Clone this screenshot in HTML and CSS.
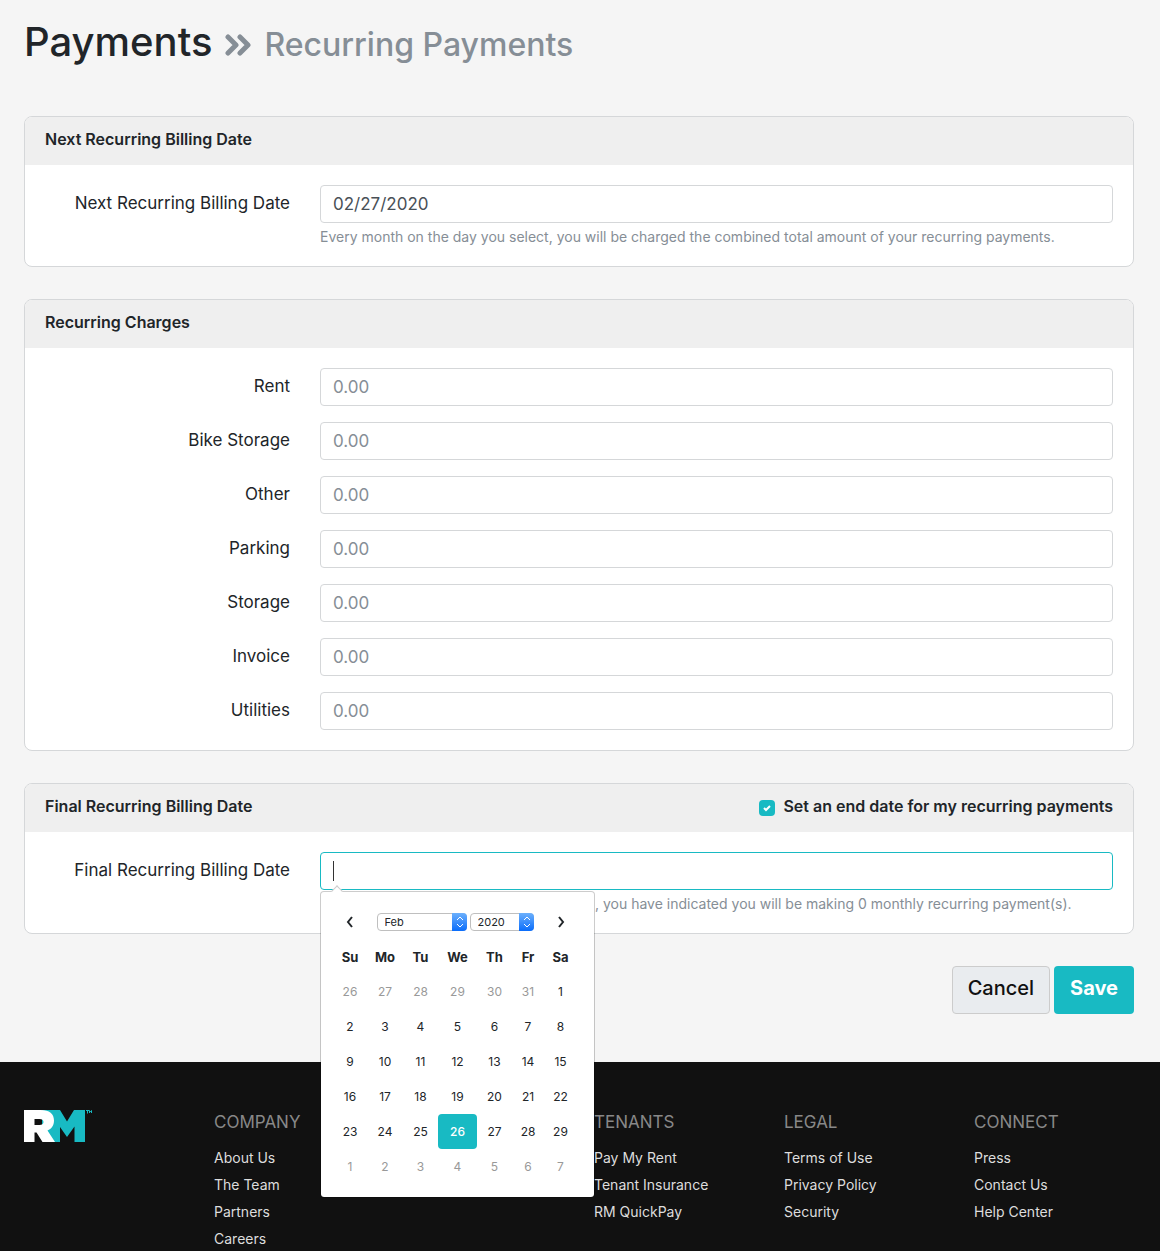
FILE: index.html
```html
<!DOCTYPE html>
<html lang="en">
<head>
<meta charset="utf-8">
<meta name="viewport" content="width=device-width, initial-scale=1">
<title>Recurring Payments</title>
<link rel="stylesheet" href="styles.css">
</head>
<body>
<main class="page">
  <h1 class="title">Payments
    <svg class="title-icon" width="26" height="22" viewBox="0 0 26 22" aria-hidden="true"><path d="M3 3l8 8-8 8M15 3l8 8-8 8"/></svg>
    <small class="subtitle">Recurring Payments</small>
  </h1>

  <form class="form">
    <section class="card">
      <header class="card-header"><h2 class="card-title">Next Recurring Billing Date</h2></header>
      <div class="card-body">
        <div class="row">
          <label class="label" for="next-date">Next Recurring Billing Date</label>
          <div class="field">
            <input class="input" id="next-date" type="text" value="02/27/2020">
            <p class="help">Every month on the day you select, you will be charged the combined total amount of your recurring payments.</p>
          </div>
        </div>
      </div>
    </section>

    <section class="card">
      <header class="card-header"><h2 class="card-title">Recurring Charges</h2></header>
      <div class="card-body">
        <div class="row"><label class="label" for="rent">Rent</label><input class="input" id="rent" type="text" placeholder="0.00"></div>
        <div class="row"><label class="label" for="bike">Bike Storage</label><input class="input" id="bike" type="text" placeholder="0.00"></div>
        <div class="row"><label class="label" for="other">Other</label><input class="input" id="other" type="text" placeholder="0.00"></div>
        <div class="row"><label class="label" for="parking">Parking</label><input class="input" id="parking" type="text" placeholder="0.00"></div>
        <div class="row"><label class="label" for="storage">Storage</label><input class="input" id="storage" type="text" placeholder="0.00"></div>
        <div class="row"><label class="label" for="invoice">Invoice</label><input class="input" id="invoice" type="text" placeholder="0.00"></div>
        <div class="row"><label class="label" for="utilities">Utilities</label><input class="input" id="utilities" type="text" placeholder="0.00"></div>
      </div>
    </section>

    <section class="card">
      <header class="card-header">
        <h2 class="card-title">Final Recurring Billing Date</h2>
        <label class="check" for="set-end">
          <span class="check-wrap">
            <input class="check-input" id="set-end" type="checkbox" checked>
            <svg class="check-mark" width="8" height="8" viewBox="0 0 8 8" aria-hidden="true"><path d="M1 4l2 2 4-4"/></svg>
          </span>
          Set an end date for my recurring payments
        </label>
      </header>
      <div class="card-body">
        <div class="row">
          <label class="label" for="final-date">Final Recurring Billing Date</label>
          <div class="field">
            <input class="input input-active" id="final-date" type="text">
            <p class="help help-beside">, you have indicated you will be making 0 monthly recurring payment(s).</p>

            <div class="picker">
              <div class="picker-bar">
                <button class="picker-nav" type="button" aria-label="Previous month"><svg width="8" height="12" viewBox="0 0 8 12" aria-hidden="true"><path d="M6 1L2 6l4 5"/></svg></button>
                <div class="picker-selects">
                  <span class="select-wrap select-month">
                    <select class="select" aria-label="Month"><option>Feb</option></select>
                    <svg class="stepper" width="15" height="18" viewBox="0 0 15 18" aria-hidden="true"><path d="M5 7l3-3 3 3M5 11l3 3 3-3"/></svg>
                  </span>
                  <span class="select-wrap select-year">
                    <select class="select" aria-label="Year"><option>2020</option></select>
                    <svg class="stepper" width="15" height="18" viewBox="0 0 15 18" aria-hidden="true"><path d="M5 7l3-3 3 3M5 11l3 3 3-3"/></svg>
                  </span>
                </div>
                <button class="picker-nav" type="button" aria-label="Next month"><svg width="8" height="12" viewBox="0 0 8 12" aria-hidden="true"><path d="M2 1l4 5-4 5"/></svg></button>
              </div>
              <table class="calendar">
                <colgroup><col class="col-su"><col class="col-mo"><col class="col-tu"><col class="col-we"><col class="col-th"><col class="col-fr"><col class="col-sa"></colgroup>
                <thead>
                  <tr><th>Su</th><th>Mo</th><th>Tu</th><th>We</th><th>Th</th><th>Fr</th><th>Sa</th></tr>
                </thead>
                <tbody>
                  <tr><td class="off">26</td><td class="off">27</td><td class="off">28</td><td class="off">29</td><td class="off">30</td><td class="off">31</td><td>1</td></tr>
                  <tr><td>2</td><td>3</td><td>4</td><td>5</td><td>6</td><td>7</td><td>8</td></tr>
                  <tr><td>9</td><td>10</td><td>11</td><td>12</td><td>13</td><td>14</td><td>15</td></tr>
                  <tr><td>16</td><td>17</td><td>18</td><td>19</td><td>20</td><td>21</td><td>22</td></tr>
                  <tr><td>23</td><td>24</td><td>25</td><td class="selected">26</td><td>27</td><td>28</td><td>29</td></tr>
                  <tr><td class="off">1</td><td class="off">2</td><td class="off">3</td><td class="off">4</td><td class="off">5</td><td class="off">6</td><td class="off">7</td></tr>
                </tbody>
              </table>
            </div>
          </div>
        </div>
      </div>
    </section>

    <div class="actions">
      <button class="btn btn-light" type="button">Cancel</button>
      <button class="btn btn-primary" type="submit">Save</button>
    </div>
  </form>
</main>

<footer class="footer">
  <a class="logo" href="#" aria-label="RM">
    <svg width="70" height="32" viewBox="0 0 70 32" aria-hidden="true">
      <path fill="#18bac3" d="M18 0H36L43 11.500L50 0H61V32H50.500V16.500L43 27L36 17V32H24L18 18Z"/>
      <path fill="#fff" fill-rule="evenodd" d="M0 0H17C25.500 0 30 4 30 10.500C30 15.500 27.500 18.800 23.500 20.500L31 32H18.500L12.500 22.500H10.500V32H0ZM10.500 9V15H15.500C18 15 19.500 14 19.500 12C19.500 10 18 9 15.500 9Z"/>
      <path fill="none" stroke="#18bac3" d="M62 .5h3M63.500 .5v3M65.500 3V.5l1 1.500 1-1.500V3"/>
    </svg>
  </a>
  <nav class="links">
    <h3 class="links-title">COMPANY</h3>
    <a class="link" href="#">About Us</a>
    <a class="link" href="#">The Team</a>
    <a class="link" href="#">Partners</a>
    <a class="link" href="#">Careers</a>
  </nav>
  <nav class="links links-tenants">
    <h3 class="links-title">TENANTS</h3>
    <a class="link" href="#">Pay My Rent</a>
    <a class="link" href="#">Tenant Insurance</a>
    <a class="link" href="#">RM QuickPay</a>
  </nav>
  <nav class="links">
    <h3 class="links-title">LEGAL</h3>
    <a class="link" href="#">Terms of Use</a>
    <a class="link" href="#">Privacy Policy</a>
    <a class="link" href="#">Security</a>
  </nav>
  <nav class="links">
    <h3 class="links-title">CONNECT</h3>
    <a class="link" href="#">Press</a>
    <a class="link" href="#">Contact Us</a>
    <a class="link" href="#">Help Center</a>
  </nav>
</footer>
</body>
</html>
```

FILE: styles.css
```css
:root {
  --teal: #18bac3;
  --ink: #212529;
  --muted: #868e96;
  --line: #d5d7d9;
  --picker-width: 275px;
}

*,
*::before,
*::after {
  box-sizing: border-box;
}

body {
  display: flex;
  flex-direction: column;
  min-height: 100vh;
  margin: 0;
  background: #f5f5f5;
  color: var(--ink);
  font: 17px/24px Inter, "Liberation Sans", sans-serif;
}

h1,
h2,
h3,
p {
  margin: 0;
}

input,
select,
button {
  font-family: inherit;
}

.page {
  padding: 18px 26px 48px 24px;
}

.title {
  display: flex;
  align-items: baseline;
  gap: 13px;
  font-size: 40px;
  font-weight: 500;
  line-height: 48px;
}

.title-icon {
  fill: none;
  stroke: var(--muted);
  stroke-width: 5;
  stroke-linecap: round;
  stroke-linejoin: round;
}

.subtitle {
  color: var(--muted);
  font-size: 32px;
  font-weight: 500;
}

.form {
  display: flex;
  flex-direction: column;
  gap: 32px;
  margin-top: 47px;
}

.card {
  border: 1px solid var(--line);
  border-radius: 8px;
  background: #fff;
}

.card-header {
  display: flex;
  justify-content: space-between;
  padding: 10px 20px 14px;
  border-radius: 7px 7px 0 0;
  background: #efefef;
}

.card-title,
.check {
  font-size: 16px;
  font-weight: 600;
  line-height: 24px;
}

.card-body {
  display: flex;
  flex-direction: column;
  gap: 16px;
  padding: 20px;
}

.row {
  display: grid;
  grid-template-columns: calc(25% - 22px) 1fr;
  gap: 30px;
}

.label {
  padding-top: 6px;
  text-align: right;
}

.field {
  position: relative;
}

.input {
  display: block;
  width: 100%;
  height: 38px;
  padding: 6px 12px;
  border: 1px solid var(--line);
  border-radius: 4px;
  background: #fff;
  color: #495057;
  font-size: 17px;
  outline: 0;
}

.input::placeholder {
  color: var(--muted);
}

/* Focused field with its text cursor */
.input-active {
  border-color: var(--teal);
  background: linear-gradient(#333, #333) 12px 8px / 1px 20px no-repeat #fff;
}

.help {
  padding-top: 4px;
  color: var(--muted);
  font-size: 14px;
  line-height: 19px;
}

.help-beside {
  padding-left: var(--picker-width);
}

.check {
  display: flex;
  gap: 8px;
}

.check-wrap {
  display: grid;
  width: 16px;
  height: 16px;
  margin-top: 6px;
}

.check-input,
.check-mark {
  grid-area: 1 / 1;
  place-self: center;
}

.check-input {
  width: 16px;
  height: 16px;
  margin: 0;
  border-radius: 4px;
  background: var(--teal);
  appearance: none;
}

.check-mark {
  fill: none;
  stroke: #fff;
  stroke-width: 2;
  pointer-events: none;
}

.picker {
  position: absolute;
  top: 39px;
  left: 0;
  z-index: 2;
  width: var(--picker-width);
  padding: 12px 12px 13px;
  border: 1px solid rgba(0, 0, 0, 0.2);
  border-radius: 4px;
  background: #fff;
  background-clip: padding-box;
}

.picker::before {
  content: "";
  position: absolute;
  top: -5px;
  left: 12px;
  width: 8px;
  height: 8px;
  border: solid #ccc;
  border-width: 1px 0 0 1px;
  background: #fff;
  transform: rotate(45deg);
}

.picker-bar {
  display: flex;
  justify-content: space-between;
  width: 244px;
  height: 35px;
}

.picker-nav {
  display: grid;
  place-items: center;
  width: 33px;
  padding: 0;
  border: 0;
  background: none;
}

.picker-nav svg {
  fill: none;
  stroke: var(--ink);
  stroke-width: 2;
}

.picker-selects {
  display: flex;
  align-items: center;
  gap: 3px;
}

.select-wrap {
  display: grid;
  height: 18px;
}

.select-month {
  width: 90px;
}

.select-year {
  width: 64px;
}

.select,
.stepper {
  grid-area: 1 / 1;
}

.select {
  width: 100%;
  height: 18px;
  padding: 0 7px;
  border: 1px solid #bfbfbf;
  border-radius: 4px;
  background: #fff;
  color: var(--ink);
  font-size: 11px;
  appearance: none;
}

.stepper {
  justify-self: end;
  border-radius: 0 4px 4px 0;
  background: linear-gradient(#6cb0fc, #0a6dfb);
  fill: none;
  stroke: #fff;
  pointer-events: none;
}

.calendar {
  width: 244px;
  table-layout: fixed;
  border-collapse: collapse;
  font-size: 12px;
  text-align: center;
}

.calendar th,
.calendar td {
  height: 35px;
  padding: 0;
}

.calendar th {
  font-size: 13px;
  font-weight: 700;
}

.calendar .off {
  color: #999;
}

.calendar .selected {
  border-radius: 4px;
  background: var(--teal);
  color: #fff;
  font-weight: 500;
}

.col-su { width: 34px; }
.col-mo { width: 36px; }
.col-tu { width: 35px; }
.col-we { width: 39px; }
.col-th { width: 35px; }
.col-fr { width: 32px; }
.col-sa { width: 33px; }

.actions {
  display: flex;
  justify-content: flex-end;
  gap: 4px;
}

.btn {
  height: 48px;
  padding: 0 15px 4px;
  border: 1px solid transparent;
  border-radius: 4px;
  font-size: 20px;
  font-weight: 500;
}

.btn-light {
  border-color: #ccc;
  background: #e9ecef;
  color: #111;
}

.btn-primary {
  background: var(--teal);
  color: #fff;
  font-weight: 700;
}

.footer {
  display: grid;
  flex: 1;
  grid-template-columns: repeat(6, 1fr);
  gap: 30px;
  padding: 48px 26px 0 24px;
  background: #111;
}

.links {
  display: flex;
  flex-direction: column;
  white-space: nowrap;
}

.links-tenants {
  grid-column: 4;
}

.links-title {
  margin-bottom: 10px;
  color: #888;
  font-size: 17px;
  font-weight: 400;
  line-height: 24px;
}

.link {
  color: #ddd;
  font-size: 14px;
  line-height: 27px;
  text-decoration: none;
}
```
